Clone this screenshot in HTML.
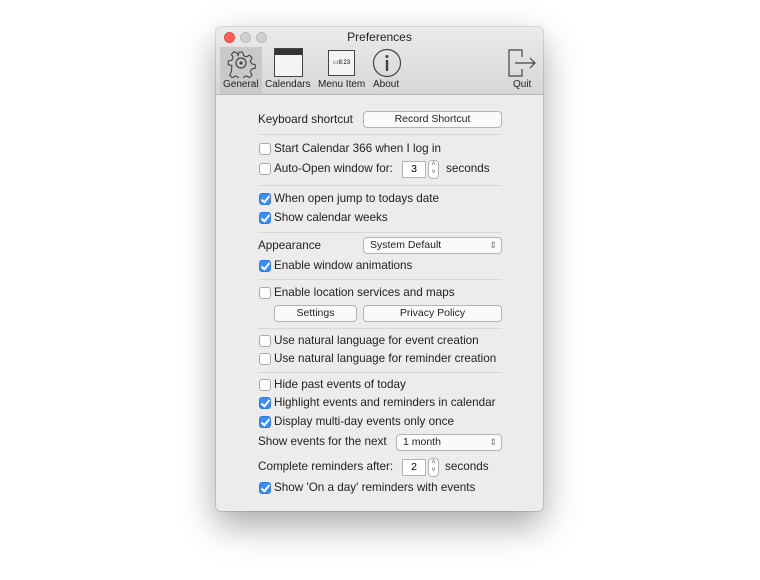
<!DOCTYPE html><html><head><meta charset="utf-8"><style>
body{margin:0;width:760px;height:580px;background:#fff;font-family:"Liberation Sans",sans-serif;position:relative;overflow:hidden}
.win{position:absolute;left:216px;top:27px;width:327px;height:484px;background:#ececec;border-radius:5px;box-shadow:0 14px 35px rgba(0,0,0,.35),0 0 0 1px rgba(0,0,0,.12);overflow:hidden}
.tb{position:absolute;left:0;top:0;width:327px;height:67px;background:linear-gradient(#ebebeb,#d6d6d6);border-bottom:1px solid #b9b9b9}
.dot{position:absolute;top:5px;width:11px;height:11px;border-radius:50%;background:#d0d0d0;border:1px solid #bcbcbc;box-sizing:border-box}
.t{position:absolute;font-size:11.7px;color:#222;white-space:nowrap;line-height:14px}
.lbl{position:absolute;font-size:10px;color:#222;top:52px;white-space:nowrap}
.cb{position:absolute;width:12px;height:12px;border:1px solid #a8a8a8;border-radius:3px;background:#fff;box-sizing:border-box}
.cb.on{background:#3b8cf5;border-color:#2f7ce0}
.cb.on:after{content:"";position:absolute;left:3px;top:0px;width:3px;height:7px;border:solid #fff;border-width:0 2px 2px 0;transform:rotate(40deg)}
.btn{position:absolute;height:15px;border:1px solid #b3b3b3;border-radius:4px;background:#fafafa;font-size:10.5px;text-align:center;line-height:15px;color:#222}
.sep{position:absolute;left:42px;width:244px;height:1px;background:#d7d7d7}
.pop{position:absolute;height:15px;border:1px solid #b3b3b3;border-radius:4px;background:#fafafa;font-size:10.5px;line-height:15px;color:#222;padding-left:6px;box-sizing:content-box}
.pop:after{content:"⇕";position:absolute;right:4px;top:0;font-size:9px;color:#777}
.num{position:absolute;width:22px;height:15px;border:1px solid #b3b3b3;background:#fff;font-size:10.5px;text-align:center;line-height:15px}
.step{position:absolute;width:9px;height:17px;border:1px solid #b3b3b3;border-radius:4px;background:#fff;font-size:7px;line-height:8px;text-align:center;color:#555}
</style></head><body>
<div class="win">
<div class="tb">
<div class="dot" style="left:8px;background:#fc5f57;border-color:#de4a42"></div>
<div class="dot" style="left:24px"></div>
<div class="dot" style="left:40px"></div>
<div class="t" style="left:0;width:327px;text-align:center;top:3px;font-size:12px">Preferences</div>
<div style="position:absolute;left:4px;top:20px;width:42px;height:47px;background:#c9c9c9"></div>
<svg style="position:absolute;left:10px;top:21px" width="30" height="30" viewBox="0 0 30 30"><g fill="none" stroke="#444" stroke-width="1.2"><path d="M13 3h4l1 4 3 1.5 3.5-2 3 3-2 3.5 1.5 3 4 1v4l-4 1-1.5 3 2 3.5-3 3-3.5-2-3 1.5-1 4h-4l-1-4-3-1.5-3.5 2-3-3 2-3.5L5 18l-4-1v-4l4-1 1.5-3-2-3.5 3-3 3.5 2L12 7z" transform="scale(.9) translate(1.5 1.5)"/><circle cx="15" cy="15" r="5"/></g><circle cx="15" cy="15" r="1.6" fill="#444"/></svg>
<div class="lbl" style="left:7px">General</div>
<div style="position:absolute;left:58px;top:21px;width:27px;height:27px;border:1px solid #444;background:#f4f4f4"><div style="height:6px;background:#333"></div></div>
<div class="lbl" style="left:49px">Calendars</div>
<div style="position:absolute;left:112px;top:23px;width:25px;height:24px;border:1px solid #444;background:#f4f4f4;font-size:6px;line-height:24px;text-align:center">▭8:23</div>
<div class="lbl" style="left:102px">Menu Item</div>
<svg style="position:absolute;left:156px;top:21px" width="30" height="30"><circle cx="15" cy="15" r="13.5" fill="none" stroke="#444" stroke-width="1.2"/><circle cx="15" cy="8.5" r="1.5" fill="#444"/><rect x="13.8" y="12" width="2.4" height="11" fill="#444"/></svg>
<div class="lbl" style="left:157px">About</div>
<svg style="position:absolute;left:292px;top:21px" width="30" height="30"><g fill="none" stroke="#444" stroke-width="1.2"><path d="M14 9V2H1v26h13v-7"/><path d="M7 15h20M22 10l5 5-5 5"/></g></svg>
<div class="lbl" style="left:297px">Quit</div>
</div>
<div class="t" style="left:42px;top:86px">Keyboard shortcut</div>
<div class="btn" style="left:147px;top:84px;width:137px">Record Shortcut</div>
<div class="sep" style="top:107px"></div>
<div class="cb" style="left:43px;top:116px"></div><div class="t" style="left:58px;top:115px">Start Calendar 366 when I log in</div>
<div class="cb" style="left:43px;top:136px"></div><div class="t" style="left:58px;top:135px">Auto-Open window for:</div>
<div class="num" style="left:186px;top:134px">3</div><div class="step" style="left:212px;top:133px">˄<br>˅</div>
<div class="t" style="left:230px;top:135px">seconds</div>
<div class="sep" style="top:158px"></div>
<div class="cb on" style="left:43px;top:166px"></div><div class="t" style="left:58px;top:165px">When open jump to todays date</div>
<div class="cb on" style="left:43px;top:185px"></div><div class="t" style="left:58px;top:184px">Show calendar weeks</div>
<div class="sep" style="top:205px"></div>
<div class="t" style="left:42px;top:212px">Appearance</div>
<div class="pop" style="left:147px;top:210px;width:131px">System Default</div>
<div class="cb on" style="left:43px;top:233px"></div><div class="t" style="left:58px;top:232px">Enable window animations</div>
<div class="sep" style="top:252px"></div>
<div class="cb" style="left:43px;top:260px"></div><div class="t" style="left:58px;top:259px">Enable location services and maps</div>
<div class="btn" style="left:58px;top:278px;width:81px">Settings</div>
<div class="btn" style="left:147px;top:278px;width:137px">Privacy Policy</div>
<div class="sep" style="top:301px"></div>
<div class="cb" style="left:43px;top:308px"></div><div class="t" style="left:58px;top:307px">Use natural language for event creation</div>
<div class="cb" style="left:43px;top:326px"></div><div class="t" style="left:58px;top:325px">Use natural language for reminder creation</div>
<div class="sep" style="top:345px"></div>
<div class="cb" style="left:43px;top:352px"></div><div class="t" style="left:58px;top:351px">Hide past events of today</div>
<div class="cb on" style="left:43px;top:370px"></div><div class="t" style="left:58px;top:369px">Highlight events and reminders in calendar</div>
<div class="cb on" style="left:43px;top:389px"></div><div class="t" style="left:58px;top:388px">Display multi-day events only once</div>
<div class="t" style="left:42px;top:408px">Show events for the next</div>
<div class="pop" style="left:180px;top:407px;width:98px">1 month</div>
<div class="t" style="left:42px;top:433px">Complete reminders after:</div>
<div class="num" style="left:186px;top:432px">2</div><div class="step" style="left:212px;top:431px">˄<br>˅</div>
<div class="t" style="left:229px;top:433px">seconds</div>
<div class="cb on" style="left:43px;top:455px"></div><div class="t" style="left:58px;top:454px">Show 'On a day' reminders with events</div>
</div>
</body></html>
